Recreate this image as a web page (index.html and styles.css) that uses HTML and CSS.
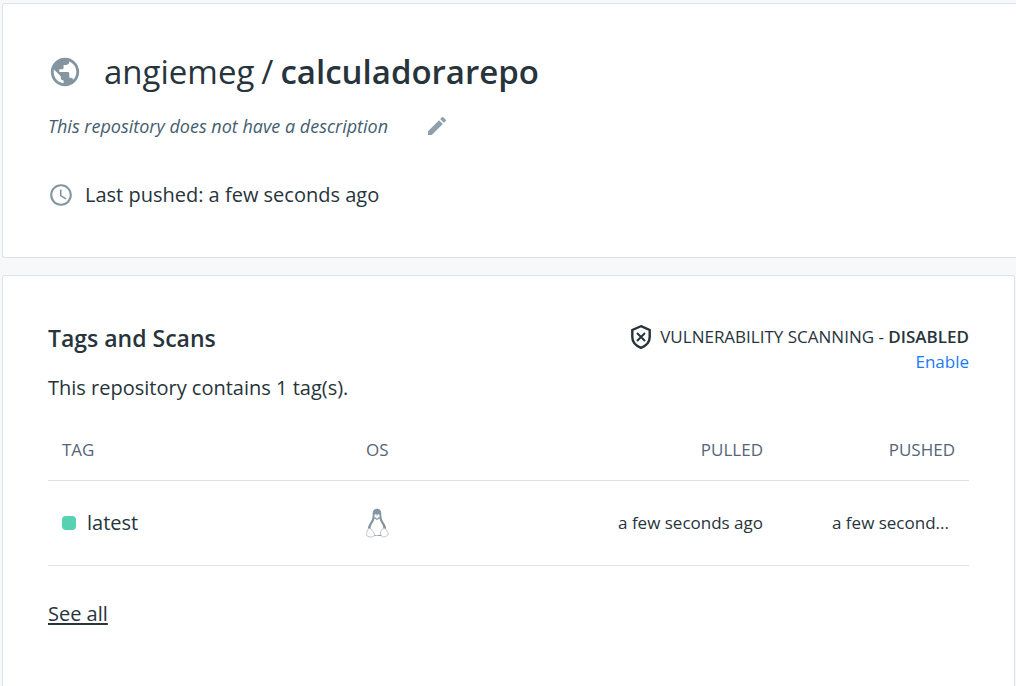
FILE: index.html
```html
<!DOCTYPE html>
<html lang="en">
<head>
<meta charset="utf-8">
<meta name="viewport" content="width=device-width, initial-scale=1">
<title>angiemeg/calculadorarepo</title>
<link rel="stylesheet" href="styles.css">
</head>
<body>
<main class="page">
  <header class="card card-summary">
    <div class="repo-heading">
      <svg class="icon-globe" viewBox="0 0 24 24" aria-hidden="true"><path d="M12 2C6.48 2 2 6.48 2 12s4.48 10 10 10 10-4.48 10-10S17.52 2 12 2zm-1 17.93c-3.95-.49-7-3.85-7-7.93 0-.62.08-1.21.21-1.79L9 15v1c0 1.1.9 2 2 2v1.93zm6.9-2.54c-.26-.81-1-1.39-1.9-1.39h-1v-3c0-.55-.45-1-1-1H8v-2h2c.55 0 1-.45 1-1V7h2c1.1 0 2-.9 2-2v-.41c2.93 1.19 5 4.06 5 7.41 0 2.08-.8 3.97-2.1 5.39z"/></svg>
      <h1 class="repo-title"><span>angiemeg</span><span class="slash">/</span><strong>calculadorarepo</strong></h1>
    </div>
    <div class="description">
      <em>This repository does not have a description</em>
      <button class="edit-button" type="button" aria-label="Edit description">
        <svg class="icon-edit" viewBox="0 0 24 24" aria-hidden="true"><path d="M3 17.25V21h3.75L17.81 9.94l-3.75-3.75L3 17.25zM20.71 7.04c.39-.39.39-1.02 0-1.41l-2.34-2.34c-.39-.39-1.02-.39-1.41 0l-1.83 1.83 3.75 3.75 1.83-1.83z"/></svg>
      </button>
    </div>
    <div class="last-pushed">
      <svg class="icon-clock" viewBox="0 0 24 24" aria-hidden="true"><path d="M11.99 2C6.47 2 2 6.48 2 12s4.47 10 9.99 10C17.52 22 22 17.52 22 12S17.52 2 11.99 2zM12 20c-4.42 0-8-3.58-8-8s3.58-8 8-8 8 3.58 8 8-3.58 8-8 8zm.5-13H11v6l5.25 3.15.75-1.23-4.5-2.67z"/></svg>
      <span>Last pushed: a few seconds ago</span>
    </div>
  </header>

  <section class="card card-tags">
    <div class="tags-top">
      <h2 class="tags-title">Tags and Scans</h2>
      <div class="scanning">
        <div class="scanning-status">
          <svg class="icon-shield" viewBox="0 0 22 26" aria-hidden="true"><path d="M11 2.200 19.700 6v7c0 5-3.700 8.800-8.700 10.800C6 21.800 2.300 18 2.300 13V6z"/><path class="cross" d="m7 9 8 8m0-8-8 8"/></svg>
          <span>VULNERABILITY SCANNING - <strong>DISABLED</strong></span>
        </div>
        <a class="enable-link" href="#">Enable</a>
      </div>
    </div>
    <p class="tag-count">This repository contains 1 tag(s).</p>
    <table class="tag-table">
      <thead>
        <tr><th class="col-tag">TAG</th><th class="col-os">OS</th><th class="col-pulled">PULLED</th><th class="col-pushed">PUSHED</th></tr>
      </thead>
      <tbody>
        <tr>
          <td><span class="tag-name"><span class="status-dot"></span>latest</span></td>
          <td>
            <svg class="icon-linux" viewBox="1 0 24 30" role="img" aria-label="Linux">
              <path class="coat" d="M12 .8C9 .8 7.700 3 7.700 6c0 4-.7 6-2.700 9-1.500 2.500-2.500 4.500-2 7l4 6h10l4-6c.5-2.500-.5-4.500-2-7-2-3-2.700-5-2.700-9 0-3-1.300-5.200-4.300-5.200z"/>
              <path class="belly" d="M9.500 10.500C9 14 5.500 16.500 5.500 21c0 3 3 6.500 6.500 6.500s6.500-3.500 6.500-6.500c0-4.500-3.500-7-4-10.500L12 12z"/>
              <path class="face" d="M9.300 7.500 10.300 6l1.700 1.300L13.700 6l1 1.500-.4 1.700-2.300 1.300-2.300-1.300z"/>
              <path class="foot" d="M4.800 20.500c1.700 0 2.700 3 4.200 4.500 1.300 2 0 4-2.500 4s-5-1-5-2.200c0-1 .5-1.800.5-2.800 0-2 1.300-3.500 2.800-3.500zM19.200 20.500c-2 0-3.700 2-3.700 4.500 0 2 1 4 3 4s5-2 5-3.200-1.500-1.300-1.500-2.300-1.300-3-2.800-3z"/>
            </svg>
          </td>
          <td class="num">a few seconds ago</td>
          <td class="num"><span class="pushed-time" title="a few seconds ago">a few second...</span></td>
        </tr>
      </tbody>
    </table>
    <a class="see-all" href="#">See all</a>
  </section>
</main>
</body>
</html>
```
FILE: styles.css
```css
* {
  box-sizing: border-box;
}

body {
  margin: 0;
  background: #f7f8fa;
  color: #27343b;
  font-family: "Open Sans", "Noto Sans", sans-serif;
  font-size: 20px;
  line-height: 28px;
}

svg {
  display: block;
  flex: none;
  fill: #8295a0;
}

.page {
  display: flex;
  flex-direction: column;
  gap: 17px;
  min-height: 100vh;
  padding: 3px 0 0 2px;
}

.card {
  background: #fff;
  border: 1px solid #e0e3e6;
  border-radius: 3px;
}

.card-summary {
  padding: 44px 45px 48px;
  border-right: 0;
  border-radius: 3px 0 0 3px;
}

.repo-heading {
  display: flex;
  align-items: center;
  gap: 22px;
}

.icon-globe {
  width: 34px;
  height: 34px;
}

.repo-title {
  margin: 0;
  font-size: 33px;
  font-weight: 400;
  line-height: 48px;
}

.slash {
  margin: 0 7px;
}

strong {
  font-weight: 600;
}

.description {
  display: flex;
  align-items: center;
  gap: 37px;
  margin-top: 16px;
  color: #445d6e;
  font-size: 18px;
}

.edit-button {
  padding: 0;
  border: 0;
  background: none;
}

.icon-edit {
  width: 24px;
  height: 24px;
  fill: #8f9fab;
}

.last-pushed {
  display: flex;
  align-items: center;
  gap: 11px;
  margin-top: 41px;
}

.icon-clock {
  width: 26px;
  height: 26px;
}

.card-tags {
  flex: 1;
  margin-right: 1px;
  padding: 48px 45px;
  border-bottom: 0;
  border-radius: 3px 3px 0 0;
}

.tags-top {
  display: flex;
  justify-content: space-between;
}

.tags-title {
  margin: 0;
  font-size: 23px;
  font-weight: 600;
}

.scanning {
  font-size: 17px;
  line-height: 24px;
  text-align: right;
}

.scanning-status {
  display: flex;
  align-items: center;
  gap: 8px;
}

.icon-shield {
  width: 22px;
  height: 26px;
  fill: none;
  stroke: #27343b;
  stroke-width: 2.4;
}

.cross {
  stroke-width: 2;
}

.enable-link {
  color: #1a7bf8;
  text-decoration: none;
}

.tag-count {
  margin: 0;
}

.tag-table {
  width: 100%;
  margin-top: 18px;
  border-collapse: collapse;
  table-layout: fixed;
}

.tag-table th,
.tag-table td {
  padding: 0 14px;
  border-bottom: 1px solid #dfe2e5;
  text-align: left;
}

.tag-table th {
  height: 60px;
  color: #556678;
  font-size: 17px;
  font-weight: 400;
}

.tag-table td {
  height: 85px;
}

.col-tag {
  width: 33%;
}

.col-pushed {
  width: 192px;
}

.tag-table .col-pulled,
.tag-table .col-pushed,
.tag-table .num {
  text-align: right;
}

.tag-table .num {
  font-size: 17px;
}

.tag-name {
  display: flex;
  align-items: center;
  gap: 11px;
}

.status-dot {
  width: 14px;
  height: 14px;
  border-radius: 4px;
  background: #56d1b2;
}

.icon-linux {
  width: 24px;
  height: 30px;
}

.coat {
  fill: #8295a0;
}

.belly,
.face,
.foot {
  fill: #fff;
}

.face,
.foot {
  stroke: #bcc6cc;
  stroke-width: 1;
}

.pushed-time {
  display: block;
  width: 123px;
  margin-left: auto;
  text-align: left;
  white-space: nowrap;
}

.see-all {
  display: inline-block;
  margin-top: 34px;
  color: inherit;
  text-underline-offset: 2px;
}
```
